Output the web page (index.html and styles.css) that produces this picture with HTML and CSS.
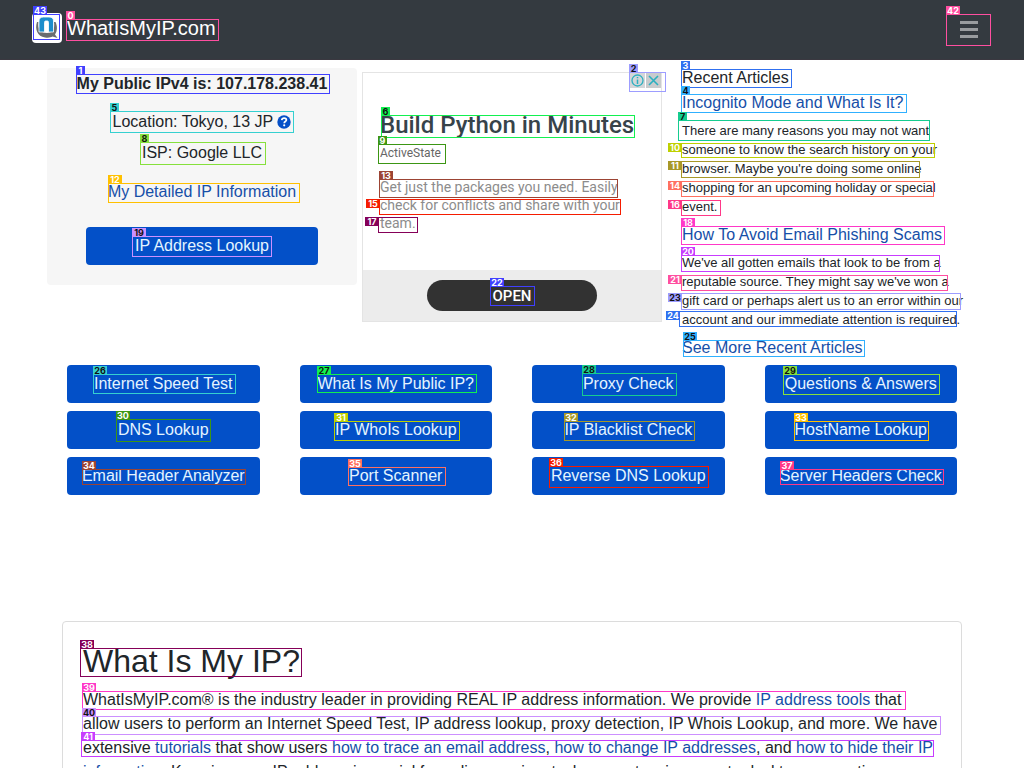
FILE: index.html
```html
<!DOCTYPE html>
<html lang="en">
<head>
<meta charset="utf-8">
<meta name="viewport" content="width=device-width, initial-scale=1">
<title>What Is My IP?</title>
<link rel="stylesheet" href="styles.css">
</head>
<body>
<header class="navbar">
  <a class="brand" href="#">
    <svg class="logo" viewBox="0 0 30 30" aria-hidden="true">
      <rect width="30" height="30" rx="4" fill="#fff"/>
      <path d="M5 9C2.500 16 5.500 23.500 13 24.500C16.500 25 19 24.500 20.500 23.500L25.500 25L23 21.500C25.500 18 25.500 13 23.500 9L22 9C23 16 20.500 20 15 20C8.500 20 5.500 16 6.500 9Z" fill="#6a6d70"/>
      <path d="M7 19V8Q7 4 11.500 4H17Q21.500 4 21.500 8V19H16.500V9.500Q16.500 8 15.500 8H13.500Q12.500 8 12.500 9.500V19Z" fill="#1c8dcc" stroke="#fff" stroke-width=".8"/>
    </svg>
    <span>WhatIsMyIP.com</span>
  </a>
  <button class="toggler" type="button" aria-label="Toggle navigation">
    <svg viewBox="0 0 18 17" aria-hidden="true"><path d="M0 1.500H18M0 8.500H18M0 15.500H18" stroke="#999c9f" stroke-width="3"/></svg>
  </button>
</header>

<main class="container">
  <section class="top">
    <div class="panel">
      <p class="ip">My Public IPv4 is: 107.178.238.41</p>
      <p class="location">Location: Tokyo, 13 JP
        <svg class="help" viewBox="0 0 14 14" aria-hidden="true"><circle cx="7" cy="7" r="6.700" fill="#0550c8"/><path d="M4.700 5.200C5 3.700 6 3.200 7.100 3.200C8.500 3.200 9.400 4 9.400 5.100C9.400 6.600 7.200 6.500 7.200 8.200" fill="none" stroke="#fff" stroke-width="1.700"/><circle cx="7.200" cy="10.300" r="1.100" fill="#fff"/></svg>
      </p>
      <p class="isp">ISP: Google LLC</p>
      <p class="detail"><a href="#">My Detailed IP Information</a></p>
      <a class="btn" href="#">IP Address Lookup</a>
    </div>

    <div class="ad">
      <div class="ad-icons">
        <svg viewBox="0 0 15 15" aria-hidden="true"><rect width="15" height="15" fill="#d4d6d8"/><circle cx="7.500" cy="7.500" r="5.500" fill="none" stroke="#2cb0c0" stroke-width="1.300"/><path d="M7.500 6.500V11M7.500 4V5.300" stroke="#2cb0c0" stroke-width="1.500"/></svg>
        <svg viewBox="0 0 15 15" aria-hidden="true"><rect width="15" height="15" fill="#c9cbcd"/><path d="M3 3L12 12M12 3L3 12" stroke="#2cb0c0" stroke-width="1.600"/></svg>
      </div>
      <div class="ad-body">
        <h2>Build Python in Minutes</h2>
        <p class="sponsor">ActiveState</p>
        <p class="pitch">Get just the packages you need. Easily check for conflicts and share with your team.</p>
      </div>
      <div class="ad-foot"><button type="button">OPEN</button></div>
    </div>

    <div class="articles">
      <h2>Recent Articles</h2>
      <h3><a href="#">Incognito Mode and What Is It?</a></h3>
      <p>There are many reasons you may not want someone to know the search history on your browser. Maybe you're doing some online shopping for an upcoming holiday or special event.</p>
      <h3><a href="#">How To Avoid Email Phishing Scams</a></h3>
      <p>We've all gotten emails that look to be from a reputable source. They might say we've won a gift card or perhaps alert us to an error within our account and our immediate attention is required.</p>
      <h3><a href="#">See More Recent Articles</a></h3>
    </div>
  </section>

  <nav class="tools" aria-label="Tools">
    <a class="btn" href="#">Internet Speed Test</a>
    <a class="btn" href="#">What Is My Public IP?</a>
    <a class="btn" href="#">Proxy Check</a>
    <a class="btn" href="#">Questions &amp; Answers</a>
    <a class="btn" href="#">DNS Lookup</a>
    <a class="btn" href="#">IP WhoIs Lookup</a>
    <a class="btn" href="#">IP Blacklist Check</a>
    <a class="btn" href="#">HostName Lookup</a>
    <a class="btn" href="#">Email Header Analyzer</a>
    <a class="btn" href="#">Port Scanner</a>
    <a class="btn" href="#">Reverse DNS Lookup</a>
    <a class="btn" href="#">Server Headers Check</a>
  </nav>

  <article class="card">
    <h1>What Is My IP?</h1>
    <p>WhatIsMyIP.com® is the industry leader in providing REAL IP address information. We provide <a href="#">IP address tools</a> that allow users to perform an Internet Speed Test, IP address lookup, proxy detection, IP Whois Lookup, and more. We have extensive <a href="#">tutorials</a> that show users <a href="#">how to trace an email address</a>, <a href="#">how to change IP addresses</a>, and <a href="#">how to hide their IP information</a>. Knowing your IP address is crucial for online gaming, tech support, using remote desktop connections,</p>
  </article>
</main>

<div class="marks" id="marks" aria-hidden="true"></div>
<script src="marks.js"></script>
</body>
</html>
```
FILE: styles.css
```css
* { box-sizing: border-box; }
body {
  margin: 0;
  position: relative;
  height: 100vh;
  overflow: hidden;
  background: #fff;
  color: #212529;
  font: 16px/24px "Liberation Sans", Arial, sans-serif;
}
h1, h2, h3, p { margin: 0; font-weight: 400; }
a { color: #164fa8; text-decoration: none; }

.navbar {
  display: flex;
  align-items: center;
  justify-content: space-between;
  height: 60px;
  padding: 0 32px 4px;
  background: #343a40;
  border-bottom: 1px solid #3a3840;
}
.brand { display: flex; align-items: center; gap: 5px; color: #fff; font-size: 20px; }
.logo { width: 30px; height: 30px; }
.toggler {
  display: flex;
  align-items: center;
  justify-content: center;
  width: 46px;
  height: 32px;
  margin-top: 4px;
  padding: 0;
  border: 0;
  background: none;
}
.toggler svg { width: 18px; height: 17px; }

.container { max-width: 930px; margin: 0 auto; }
.top { display: grid; grid-template-columns: repeat(3, 1fr); align-items: start; }

.panel { margin-top: 8px; padding: 4px 19px 20px; background: #f6f6f6; border-radius: 4px; text-align: center; }
.panel .btn { margin: 0 20px; }
.ip { font-weight: 700; margin-bottom: 14px; }
.location { margin-bottom: 7px; }
.isp { margin-bottom: 15px; }
.detail { margin-bottom: 23px; }
.ip, .detail a { white-space: nowrap; }
.help { width: 14px; height: 14px; vertical-align: -2px; }
.btn {
  display: block;
  padding: 7px 12px;
  border-radius: 4px;
  background: #0350c8;
  color: #e4f4ff;
  text-align: center;
  white-space: nowrap;
}

.ad {
  position: relative;
  display: flex;
  flex-direction: column;
  margin: 12px 5px 0;
  border: 1px solid #e4e4e4;
  min-height: 250px;
  font-family: Roboto, sans-serif;
}
.ad-icons { position: absolute; top: 0; right: 0; display: flex; gap: 1px; }
.ad-icons svg { width: 15px; height: 15px; }
.ad-body { flex: 1; padding: 37px 17px 0; }
.ad h2 { color: #37434a; font-size: 24px; font-weight: 500; line-height: 30px; white-space: nowrap; }
.sponsor { margin-top: 4px; color: #666; font-size: 12px; line-height: 18px; }
.pitch { margin-top: 16px; color: #8c8c8c; font-size: 14px; line-height: 18px; }
.ad-foot { padding: 10px 64px; background: #ececec; }
.ad-foot button {
  display: block;
  width: 100%;
  height: 31px;
  padding: 0;
  border: 0;
  border-radius: 16px;
  background: #323232;
  color: #fff;
  font: 500 15px/30px Roboto, sans-serif;
}

.articles { padding: 6px 10px 5px 15px; }
.articles h2, .articles h3 { font-size: 16px; line-height: 24px; }
.articles h3 { margin-top: 1px; }
.articles p { margin: 6px 0 7px; font-size: 13px; line-height: 19px; }

.tools { display: grid; grid-template-columns: repeat(4, 1fr); gap: 8px 40px; padding: 0 20px; }

.card { margin: 126px 15px 0; padding: 20px; border: 1px solid #dcdcdc; border-radius: 4px; }
.card h1 { margin-bottom: 8px; font-size: 32px; line-height: 38px; }

.marks { position: absolute; inset: 0; pointer-events: none; }
.mark { position: absolute; border: 1px solid; }
.tag {
  position: absolute;
  left: -1px;
  top: -9px;
  width: 9px;
  height: 9px;
  color: #fff;
  font: 700 9px/9px Inter, sans-serif;
  text-align: center;
}
.wide .tag { width: 14px; }
.side .tag { left: auto; right: 100%; top: -1px; }
.dark .tag { color: #111; }
```
FILE: marks.js
```js
// id, x, y, width, height, colour, classes
const marks = [
  [0, 66, 19, 153, 22, "#ff4fa0", ""],
  [43, 33, 14, 27, 26, "#4040ff", ""],
  [42, 946, 14, 45, 32, "#ff4fa0", ""],
  [1, 76, 74, 254, 20, "#4040ff", ""],
  [5, 110, 111, 184, 22, "#35d0d0", "dark"],
  [8, 140, 142, 126, 23, "#86e03c", "dark"],
  [12, 108, 183, 192, 20, "#ffc000", ""],
  [19, 132, 236, 140, 21, "#cc90ff", "dark"],
  [2, 629, 72, 37, 20, "#9d9dff", "dark"],
  [6, 381, 115, 254, 23, "#12f050", "dark"],
  [9, 378, 144, 68, 20, "#3c9614", ""],
  [13, 379, 179, 239, 19, "#9c4434", ""],
  [15, 379, 199, 242, 16, "#f51c00", "side"],
  [17, 378, 217, 40, 16, "#850058", "side"],
  [22, 490, 286, 45, 20, "#4040ff", ""],
  [3, 681, 69, 111, 19, "#3070f0", ""],
  [4, 681, 94, 226, 19, "#30b0ff", "dark"],
  [7, 678, 120, 252, 21, "#16cc90", "dark"],
  [10, 681, 143, 254, 15, "#bed000", "side"],
  [11, 681, 161, 239, 17, "#a89828", "side"],
  [14, 681, 181, 253, 16, "#ff7060", "side"],
  [16, 681, 200, 40, 16, "#ff3888", "side"],
  [18, 681, 226, 264, 19, "#ff38c8", ""],
  [20, 681, 255, 259, 17, "#c83cff", ""],
  [21, 681, 275, 267, 16, "#ff4fa0", "side"],
  [23, 681, 293, 280, 17, "#9d9dff", "side dark"],
  [24, 679, 311, 278, 16, "#3070f0", "side"],
  [25, 683, 340, 182, 17, "#30b0ff", "dark"],
  [26, 93, 374, 143, 20, "#35d0d0", "dark"],
  [27, 317, 374, 160, 19, "#12f050", "dark"],
  [28, 582, 373, 95, 23, "#16cc90", "dark"],
  [29, 783, 374, 157, 21, "#86e03c", "dark"],
  [30, 116, 419, 95, 23, "#3c9614", ""],
  [31, 334, 421, 126, 20, "#bed000", ""],
  [32, 564, 421, 131, 20, "#a89828", ""],
  [33, 794, 421, 135, 20, "#ffc000", ""],
  [34, 82, 469, 164, 16, "#9c4434", ""],
  [35, 348, 467, 98, 19, "#ff7060", ""],
  [36, 549, 466, 160, 22, "#f51c00", ""],
  [37, 780, 469, 164, 16, "#ff3888", ""],
  [38, 80, 648, 222, 29, "#850058", ""],
  [39, 82, 691, 824, 19, "#ff38c8", ""],
  [40, 82, 716, 859, 19, "#cc90ff", "dark"],
  [41, 81, 740, 853, 17, "#c83cff", ""]
];

const layer = document.getElementById("marks");
for (const [id, x, y, w, h, colour, classes] of marks) {
  const box = document.createElement("div");
  box.className = `mark ${id > 9 ? "wide" : ""} ${classes}`;
  box.style.cssText = `left:${x}px;top:${y}px;width:${w}px;height:${h}px;border-color:${colour}`;
  const tag = document.createElement("span");
  tag.className = "tag";
  tag.textContent = id;
  tag.style.background = colour;
  box.append(tag);
  layer.append(box);
}
```
